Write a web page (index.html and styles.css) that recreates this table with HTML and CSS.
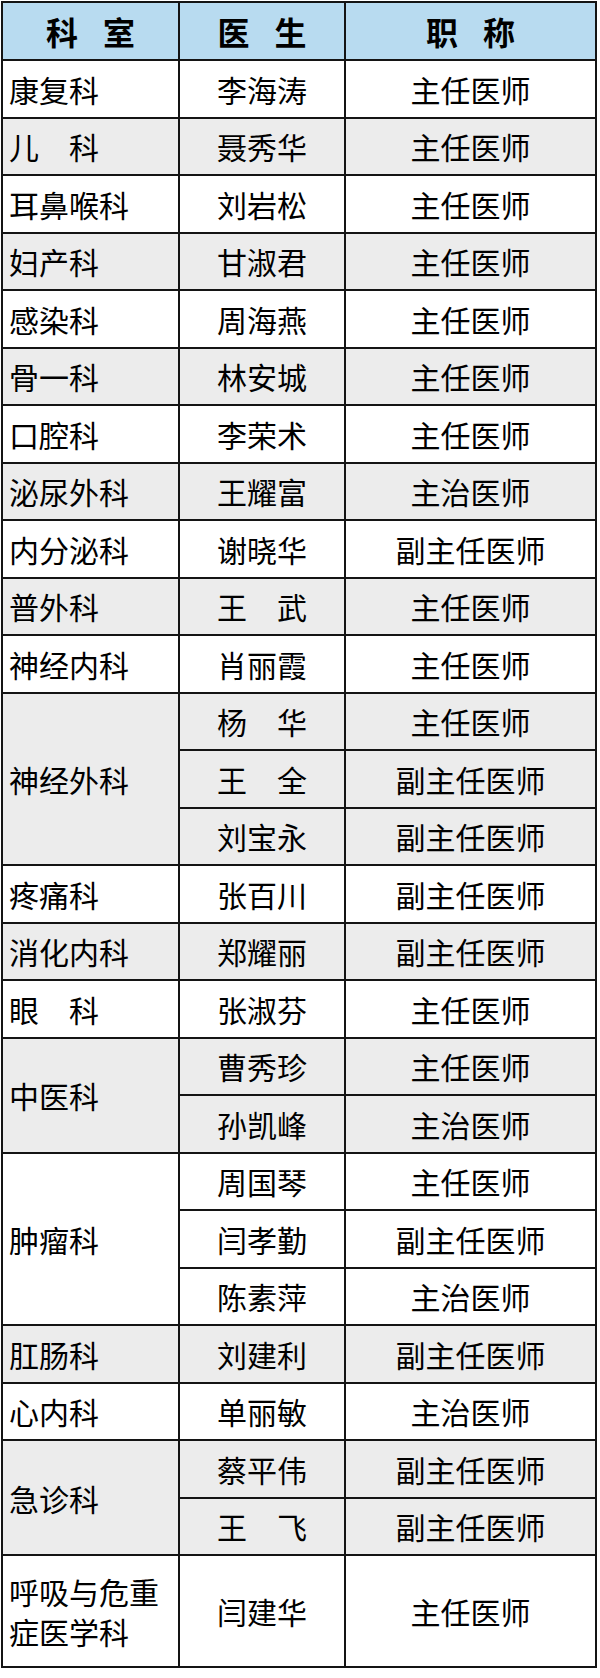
FILE: index.html
```html
<!DOCTYPE html>
<html lang="zh-CN">
<head>
<meta charset="utf-8">
<title>科室医生</title>
<link rel="stylesheet" href="styles.css">
</head>
<body>
<table class="roster">
  <colgroup><col class="c-dept"><col class="c-doc"><col class="c-title"></colgroup>
  <thead>
    <tr class="head"><th>科室</th><th>医生</th><th>职称</th></tr>
  </thead>
  <tbody>
    <tr class="w"><td class="dept">康复科</td><td>李海涛</td><td>主任医师</td></tr>
    <tr class="g"><td class="dept">儿　科</td><td>聂秀华</td><td>主任医师</td></tr>
    <tr class="w"><td class="dept">耳鼻喉科</td><td>刘岩松</td><td>主任医师</td></tr>
    <tr class="g"><td class="dept">妇产科</td><td>甘淑君</td><td>主任医师</td></tr>
    <tr class="w"><td class="dept">感染科</td><td>周海燕</td><td>主任医师</td></tr>
    <tr class="g"><td class="dept">骨一科</td><td>林安城</td><td>主任医师</td></tr>
    <tr class="w"><td class="dept">口腔科</td><td>李荣术</td><td>主任医师</td></tr>
    <tr class="g"><td class="dept">泌尿外科</td><td>王耀富</td><td>主治医师</td></tr>
    <tr class="w"><td class="dept">内分泌科</td><td>谢晓华</td><td>副主任医师</td></tr>
    <tr class="g"><td class="dept">普外科</td><td>王　武</td><td>主任医师</td></tr>
    <tr class="w"><td class="dept">神经内科</td><td>肖丽霞</td><td>主任医师</td></tr>
    <tr class="g"><td class="dept" rowspan="3">神经外科</td><td>杨　华</td><td>主任医师</td></tr>
    <tr class="g"><td>王　全</td><td>副主任医师</td></tr>
    <tr class="g"><td>刘宝永</td><td>副主任医师</td></tr>
    <tr class="w"><td class="dept">疼痛科</td><td>张百川</td><td>副主任医师</td></tr>
    <tr class="g"><td class="dept">消化内科</td><td>郑耀丽</td><td>副主任医师</td></tr>
    <tr class="w"><td class="dept">眼　科</td><td>张淑芬</td><td>主任医师</td></tr>
    <tr class="g"><td class="dept" rowspan="2">中医科</td><td>曹秀珍</td><td>主任医师</td></tr>
    <tr class="g"><td>孙凯峰</td><td>主治医师</td></tr>
    <tr class="w"><td class="dept" rowspan="3">肿瘤科</td><td>周国琴</td><td>主任医师</td></tr>
    <tr class="w"><td>闫孝勤</td><td>副主任医师</td></tr>
    <tr class="w"><td>陈素萍</td><td>主治医师</td></tr>
    <tr class="g"><td class="dept">肛肠科</td><td>刘建利</td><td>副主任医师</td></tr>
    <tr class="w"><td class="dept">心内科</td><td>单丽敏</td><td>主治医师</td></tr>
    <tr class="g"><td class="dept" rowspan="2">急诊科</td><td>蔡平伟</td><td>副主任医师</td></tr>
    <tr class="g"><td>王　飞</td><td>副主任医师</td></tr>
    <tr class="w tall"><td class="dept multi">呼吸与危重<br>症医学科</td><td>闫建华</td><td>主任医师</td></tr>
  </tbody>
</table>
</body>
</html>
```
FILE: styles.css
```css
html, body {
  margin: 0;
  padding: 0;
  background: #ffffff;
}

body {
  font-family: "Noto Sans CJK SC", "Noto Sans", sans-serif;
  color: #000;
}

.roster {
  margin: 1px 0 0 1px;
  width: 596px;
  table-layout: fixed;
  border-collapse: separate;
  border-spacing: 0;
  border-top: 2px solid #141414;
  border-left: 2px solid #141414;
}

.c-dept { width: 177px; }
.c-doc { width: 166px; }
.c-title { width: 251px; }

.roster th,
.roster td {
  box-sizing: border-box;
  border-right: 2px solid #141414;
  border-bottom: 2px solid #141414;
  padding: 0;
  text-align: center;
  vertical-align: middle;
  font-size: 30px;
  line-height: 36px;
  font-weight: 400;
  white-space: nowrap;
}

.roster .head {
  height: 58px;
  background: #b8dbf0;
}

.roster th {
  font-size: 32px;
  font-weight: 700;
  letter-spacing: 25px;
  padding-left: 25px;
}

.roster tbody tr {
  height: 57.5px;
}

.roster tbody tr.tall {
  height: 112px;
}

.w { background: #ffffff; }
.g { background: #ececec; }

.roster td.dept {
  text-align: left;
  padding-left: 6px;
}

.roster td.multi {
  line-height: 40px;
}
```
